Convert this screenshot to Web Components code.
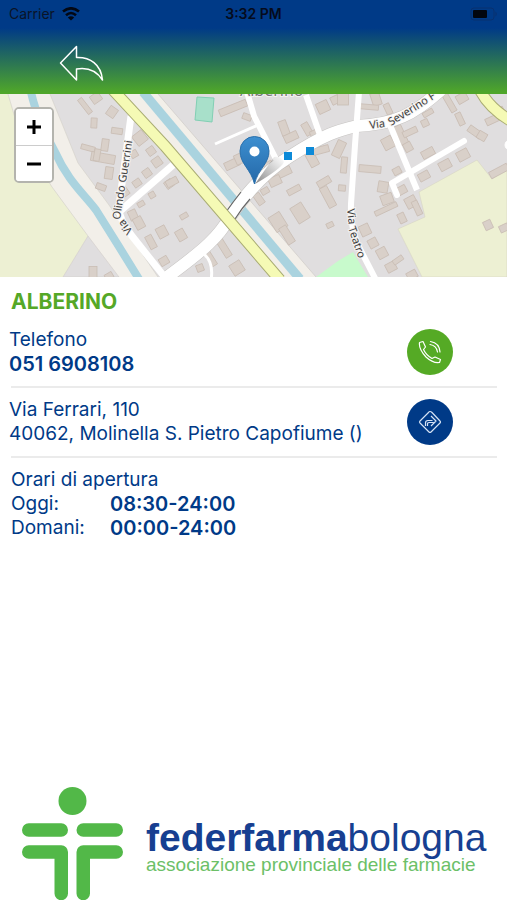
<!DOCTYPE html>
<html lang="it">
<head>
<meta charset="utf-8">
<meta name="viewport" content="width=device-width, initial-scale=1">
<title>Federfarma Bologna</title>
<style>
  body { margin: 0; background: #fff; color: #003a87; font-family: Inter, Roboto, "Liberation Sans", sans-serif; }
</style>
</head>
<body>
<pharmacy-page></pharmacy-page>

<script>
const define = (name, html, setup) => {
  const template = document.createElement('template');
  template.innerHTML = html;
  customElements.define(name, class extends HTMLElement {
    constructor() {
      super();
      this.attachShadow({ mode: 'open' }).append(template.content.cloneNode(true));
      if (setup) setup(this.shadowRoot, this);
    }
  });
};

define('status-bar', `
<style>
  :host { display: grid; grid-template-columns: 1fr auto 1fr; align-items: center; height: 28px; padding: 0 9px; color: #0a1428; font-size: 14px; line-height: 20px; }
  .left { display: flex; align-items: center; gap: 7px; }
  .time { font-weight: 600; color: #050b1c; }
  .battery { justify-self: end; }
  svg { display: block; }
</style>
<div class="left"><span>Carrier</span>
  <svg width="18" height="14" viewBox="0 0 18 14" fill="none" stroke="#030814" stroke-width="2.6" aria-hidden="true">
    <path d="M1 4.6Q9-2 17 4.6"/><path d="M4 8.2Q9 3.8 14 8.2"/><path d="M9 13.5L5.8 10.4Q9 8 12.2 10.4Z" fill="#030814" stroke="none"/>
  </svg>
</div>
<span class="time">3:32 PM</span>
<svg class="battery" width="28" height="14" viewBox="0 0 28 14" aria-hidden="true">
  <rect x="1" y="1" width="23" height="12" rx="3" fill="none" stroke="#08306f"/>
  <rect x="3" y="3" width="14" height="8" rx="1" fill="#02060f"/>
  <path d="M25.500 4.500Q28 7 25.500 9.500Z" fill="#08306f"/>
</svg>`);

define('app-header', `
<style>
  :host { display: block; background: linear-gradient(#003a87 0, #003a87 28px, #4fa62a 92px); }
  nav { display: flex; padding: 14px 56px 8px; }
  button { display: block; padding: 0; border: 0; background: none; cursor: pointer; }
  svg { display: block; }
</style>
<slot></slot>
<nav><button type="button" aria-label="Indietro">
  <svg width="50" height="44" viewBox="56 42 50 44" fill="none" stroke="#fff" stroke-width="1.500" stroke-linejoin="round">
    <path d="M60.500 63L76.500 46.500V57.500C90 57 101 64 102.500 80C96 70 88 67 76.500 69V80Z"/>
  </svg></button></nav>`);

define('map-view', `
<style>
  :host { display: block; position: relative; height: 183px; overflow: hidden; background: #e0dfdf; }
  svg { display: block; width: 100%; height: 100%; }
  text { font-family: "Noto Sans", sans-serif; font-size: 11px; fill: #3c3c3c; stroke: #f4f2f0; stroke-width: 2px; paint-order: stroke; }
  .town { font-size: 16px; fill: #777; }
  .zoom { position: absolute; top: 13px; left: 14px; width: 36px; border: 2px solid #b4b4ae; border-radius: 5px; overflow: hidden; background: #fff; }
  .zoom button { display: grid; place-items: center; width: 100%; height: 36px; padding: 0; border: 0; background: #fff; cursor: pointer; }
  .zoom button + button { border-top: 1px solid #ccc; }
  .zoom svg { width: 16px; height: 16px; }
</style>
<svg viewBox="0 94 507 183" preserveAspectRatio="xMidYMid slice" role="img" aria-label="Mappa di Alberino">
  <defs>
    <linearGradient id="pin" x1="0" y1="0" x2="0" y2="1"><stop stop-color="#3d8fd0"/><stop offset="1" stop-color="#2468a8"/></linearGradient>
    <linearGradient id="shade" x1="0" y1="1" x2="1" y2="0"><stop stop-color="#333" stop-opacity=".6"/><stop offset="1" stop-color="#555" stop-opacity="0"/></linearGradient>
  </defs>
  <rect y="94" width="507" height="183" fill="#e0dedf"/>
  <path d="M0 94H50L78 163L109 205L158 277H0Z" fill="#f2efe9"/>
  <path d="M0 94H8L20 135L52 187L88 236L63 277H0Z" fill="#edf0d3"/>
  <path d="M88 236L119 277H63Z" fill="#e0dedf" stroke="#d1cdca" stroke-width=".6"/>
  <path d="M50 94L78 163L109 205L158 277M8 94L20 135L52 187L88 236" fill="none" stroke="#d5d2cb" stroke-width=".7"/>
  <path d="M31 92C35 111 47 137 55 152C68 181 83 193 96 210C113 237 123 253 139 279" fill="none" stroke="#aad3df" stroke-width="8"/>
  <path d="M120 94H158L316 277H278Z" fill="#f2efe9"/>
  <path d="M158 94L316 277" stroke="#cfccc7" stroke-width=".7"/>
  <path d="M143 92L300 279" stroke="#aad3df" stroke-width="9"/>
  <path d="M477 160L419 192L425 217L398 229L422 277H507V169L492 179Z" fill="#edf0d3" stroke="#d6d5c2" stroke-width=".6"/>
  <path d="M316 277L338 261L353 252L368 277Z" fill="#c8facc"/>
  <path d="M197 97L214 98L212 122L195 120Z" fill="#a8e0ca" stroke="#82cfb4"/>
  <g id="buildings" fill="#d9d0c9" stroke="#c9bdb4" stroke-width=".8"></g>
  <path d="M163 280C207 248 219 236 230 217C246 193 265 172 289 157C326 133 340 130 357 126C395 124 413 115 441 90" fill="none" stroke="#c6c4c2" stroke-width="13"/>
  <g fill="none" stroke="#fff" stroke-linejoin="round">
    <path d="M131 116L119 206Q118 218 132 236L167 280M119 212L173 165" stroke-width="7"/>
    <path d="M247 92L254 116L278 163M306 95L321 138M359 92L355 145L351 204Q350 230 360 249L376 280M390 125L417 190" stroke-width="6"/>
    <path d="M258 125L215 144M204 254Q214 263 211 280" stroke-width="3"/>
    <path d="M464 141L392 183L397 195" stroke-width="6" stroke-linecap="round"/>
    <path d="M163 280C207 248 219 236 230 217C246 193 265 172 289 157C326 133 340 130 357 126C395 124 413 115 441 90" stroke-width="12"/>
    <circle cx="510" cy="145" r="5" fill="#fff"/>
  </g>
  <path d="M226 212Q233 202 241 192M235 219Q242 208 250 199" stroke="#666" stroke-width="1.200" fill="none"/>
  <g fill="none">
    <path d="M113 90L165 146L280 280M480 90Q489 108 511 121" stroke="#a9ac73" stroke-width="12"/>
    <path d="M113 90L165 146L280 280M480 90Q489 108 511 121" stroke="#f5fab5" stroke-width="10"/>
  </g>
  <text transform="translate(133 231) rotate(-128)">Via</text>
  <text transform="translate(120 220) rotate(-81)">Olindo Guerrini</text>
  <text transform="translate(370 129) rotate(-8)">Via</text>
  <text transform="translate(391 126) rotate(-32)">Severino F</text>
  <text transform="translate(347 209) rotate(84)">Via</text>
  <text transform="translate(348 228) rotate(71)">Teatro</text>
  <text class="town" x="240" y="96">Alberino</text>
  <path d="M284 152h8v8h-8zM306 147h8v8h-8z" fill="#0d8ad8"/>
  <path d="M255 184L274 157Q281 156 284 162Q281 169 255 184Z" fill="url(#shade)"/>
  <path d="M254.500 184C251 169 240 164 240 151A14.500 14.500 0 0 1 269 151C269 164 258 169 254.500 184Z" fill="url(#pin)" stroke="#2a70ac"/>
  <circle cx="254.500" cy="151.500" r="5" fill="#fff"/>
</svg>
<div class="zoom">
  <button type="button" aria-label="Ingrandisci"><svg viewBox="0 0 16 16" stroke="#000" stroke-width="3"><path d="M1 8H15M8 1V15"/></svg></button>
  <button type="button" aria-label="Riduci"><svg viewBox="0 0 16 16" stroke="#000" stroke-width="3"><path d="M1 8H15"/></svg></button>
</div>`, root => {
  // Each building: centre x, centre y, width, height, rotation in degrees
  const blocks = [
    [85,106,5,18,-38],[96,98,10,9,-35],[112,112,9,10,35],[94,123,6,10,3],[117,131,11,6,8],[105,145,7,12,8],[88,148,14,5,15],[103,158,24,9,10],[97,155,6,12,10],[109,173,8,12,8],[101,187,10,6,20],
    [140,138,12,12,-38],[134,154,7,7,-30],[151,151,8,8,-35],[157,162,9,9,-35],[147,173,8,8,-35],[137,183,8,7,-35],[125,192,7,8,-35],[152,195,6,6,-30],[141,204,7,5,-30],[169,184,8,8,-35],
    [133,215,8,10,-25],[139,223,9,12,-28],[151,242,7,14,-28],[162,232,10,11,-28],[164,261,9,8,-30],[93,272,8,11,0],[109,276,8,6,-30],
    [233,108,29,7,-22],[247,117,9,6,20],[232,164,15,8,-25],[239,159,8,10,-25],[284,128,8,15,-20],[291,137,14,8,-25],[307,129,7,13,-30],[315,134,9,8,-25],[323,107,12,11,-25],[335,100,8,8,-25],
    [270,168,9,13,-30],[282,173,19,8,-25],[275,181,12,9,-25],[259,199,7,12,-35],[265,191,8,6,-30],[294,190,14,6,-28],[311,157,9,20,-28],[321,150,16,7,-15],[324,182,14,7,-30],[328,197,8,22,-28],
    [300,213,13,18,-32],[278,222,13,17,-32],[287,235,8,19,-32],[330,225,7,5,-25],[181,235,9,11,-30],[184,216,8,5,-30],[172,182,12,7,-28],[224,248,7,20,-32],[211,259,6,15,-32],[237,268,12,12,-32],[200,268,7,7,-20],
    [343,99,11,12,0],[376,99,9,13,-18],[369,107,19,5,5],[388,109,6,11,-25],[401,135,8,20,-25],[410,132,15,6,-25],[425,123,7,7,-25],[428,113,11,5,-30],[449,102,6,22,-30],[460,119,6,13,-25],[462,98,11,9,-30],
    [388,143,11,12,-28],[408,147,8,9,-28],[339,149,9,17,25],[344,165,6,16,5],[342,188,7,6,5],[370,169,22,7,5],[397,171,8,7,-28],[428,153,13,8,-28],[445,165,12,9,-28],[463,155,12,10,-28],[424,176,11,8,-28],
    [383,187,10,11,10],[387,199,12,10,-20],[402,190,9,8,-28],[411,202,11,11,-28],[417,208,6,15,-25],[386,209,24,5,-25],[402,218,7,10,-25],[365,230,10,11,-25],[373,243,9,9,-28],[382,253,10,10,-28],[391,267,10,9,-28],[398,260,11,5,-35],[412,275,10,8,-28],
    [475,132,15,7,35],[482,136,9,8,30],[492,120,13,7,-25],[500,111,8,7,-25],[499,171,20,7,-28],[488,225,8,9,-25],[504,228,9,7,-25]
  ];
  root.getElementById('buildings').innerHTML = blocks.map(([x, y, w, h, a]) =>
    `<rect x="${-w / 2}" y="${-h / 2}" width="${w}" height="${h}" transform="translate(${x} ${y}) rotate(${a})"/>`).join('');
});

define('info-row', `
<style>
  :host { display: flex; align-items: center; justify-content: space-between; margin: 0 10px 0 11px; padding: 10px 44px 10px 0; border-bottom: 2px solid #ebebeb; font-size: 19px; line-height: 24px; }
  .text { margin-left: -2px; }
</style>
<div class="text"><slot></slot></div><slot name="action"></slot>`);

define('round-link', `
<style>
  :host { display: block; flex: none; }
  a { display: grid; place-items: center; width: 46px; height: 46px; border-radius: 50%; background: var(--fill, #003a87); }
  ::slotted(svg) { display: block; }
</style>
<a><slot></slot></a>`, (root, host) => {
  const link = root.querySelector('a');
  link.href = host.getAttribute('to') || '#';
  link.setAttribute('aria-label', host.getAttribute('label') || '');
});

define('opening-hours', `
<style>
  :host { display: block; padding: 10px 11px; font-size: 19px; line-height: 24px; }
  h2 { margin: 0; font: inherit; }
  dl { display: grid; grid-template-columns: 99px 1fr; margin: 0; }
  dd { margin: 0; font-size: 20px; font-weight: 600; }
</style>
<h2>Orari di apertura</h2>
<dl><dt>Oggi:</dt><dd>08:30-24:00</dd><dt>Domani:</dt><dd>00:00-24:00</dd></dl>`);

define('brand-footer', `
<style>
  :host { display: flex; align-items: flex-end; gap: 23px; padding: 0 22px; font-family: "Liberation Sans", Arial, sans-serif; }
  svg { display: block; flex: none; }
  .words { padding-bottom: 25px; white-space: nowrap; }
  .name { font-size: 39px; line-height: 34px; color: #173f91; }
  .tag { font-size: 19px; line-height: 20px; color: #6cc067; }
</style>
<svg width="101" height="113" viewBox="22 787 101 113" aria-hidden="true" fill="none" stroke="#52b848" stroke-width="13.500" stroke-linecap="round" stroke-linejoin="round">
  <circle cx="72.500" cy="801" r="14" fill="#52b848" stroke="none"/>
  <path d="M28.750 830H61.250M83.250 830H116.250M28.750 852H61.250V893.500M116.250 852H83.250V893.500"/>
</svg>
<div class="words"><div class="name"><b>federfarma</b>bologna</div><div class="tag">associazione provinciale delle farmacie</div></div>`);

define('pharmacy-page', `
<style>
  :host { display: flex; flex-direction: column; min-height: 100vh; }
  h1 { margin: 0; padding: 13px 11px 4px; font-size: 21px; line-height: 24px; font-weight: 700; color: #55a827; }
  brand-footer { margin-top: auto; }
  b { display: block; font-size: 20px; font-weight: 600; }
  .green { --fill: #55aa25; }
</style>
<app-header><status-bar></status-bar></app-header>
<map-view></map-view>
<main>
  <h1>ALBERINO</h1>
  <info-row>
    <div>Telefono</div><b>051 6908108</b>
    <round-link slot="action" class="green" to="tel:0516908108" label="Chiama">
      <svg width="24" height="24" viewBox="0 0 24 24" fill="none" stroke="#fff" stroke-width="1.200" stroke-linejoin="round" stroke-linecap="round">
        <path d="M1.500 2.500L5 1.500L7.500 7L5.500 9.500Q8 15 14 18.500L17 17L22.500 19.500L21.500 22.500Q15 23.500 8 17Q.5 9 1.500 2.500Z"/>
        <path d="M12.500 1.500Q21.500 3 22 12M12 4.500Q18.500 5.500 19.500 12"/>
      </svg>
    </round-link>
  </info-row>
  <info-row>
    <div>Via Ferrari, 110</div><div>40062, Molinella S. Pietro Capofiume ()</div>
    <round-link slot="action" to="#mappa" label="Indicazioni stradali">
      <svg width="24" height="24" viewBox="0 0 24 24" fill="none" stroke="#d5e2f4" stroke-width="1.200" stroke-linejoin="round">
        <path d="M12 1.500Q13 1.500 14 2.500L22 11Q23 12 22 13L13 22Q12 23 11 22L2 13Q1 12 2 11L10.500 2.500Q11 1.500 12 1.500Z"/>
        <path d="M7.500 16V13Q7.500 10.500 10 10.500H14.500M13 6L18 11L13 16M9.500 16V13.500Q9.500 12.500 11 12.500H15.500"/>
      </svg>
    </round-link>
  </info-row>
  <opening-hours></opening-hours>
</main>
<brand-footer></brand-footer>`);
</script>
</body>
</html>
